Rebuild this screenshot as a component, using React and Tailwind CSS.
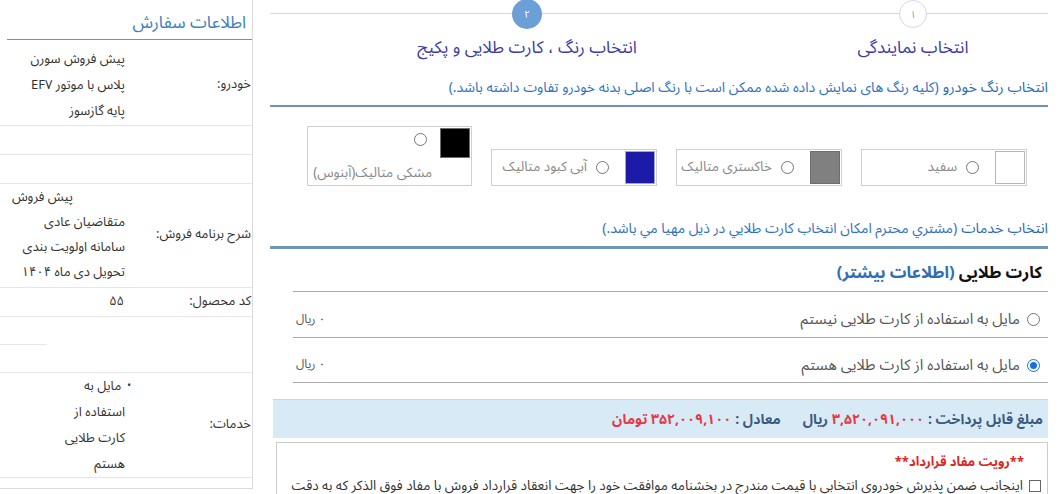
import React from "react";

const FONT = { fontFamily: '"Noto Sans Arabic", "Noto Naskh Arabic", "DejaVu Sans", sans-serif' };

function Radio({ checked = false }) {
  if (checked) {
    return (
      <span className="block shrink-0 w-[13px] h-[13px] rounded-full border-[1.5px] border-[#1a6fd6] bg-white">
        <span className="flex w-full h-full items-center justify-center">
          <span className="block w-[7px] h-[7px] rounded-full bg-[#1a6fd6]" />
        </span>
      </span>
    );
  }
  return <span className="block shrink-0 w-[13px] h-[13px] rounded-full border-[1.5px] border-[#767676] bg-white" />;
}

function ColorCard({ swatch, swatchBorder, label }) {
  return (
    <div className="w-[166px] h-[37px] border border-[#cfcfcf] bg-white p-[1px] flex items-center">
      <span className={`block shrink-0 w-[30px] h-[33px] border ${swatchBorder}`} style={{ background: swatch }} />
      <span className="block mr-[16px] ml-[9px]"><Radio /></span>
      <span className="text-[13.5px] text-[#8a8a8a] whitespace-nowrap">{label}</span>
    </div>
  );
}

function SideRow({ label, children, className = "" }) {
  return (
    <div className={`flex border-b border-[#e6e6e6] ${className}`}>
      <div className="w-[124px] shrink-0 flex items-center pr-[1px] text-[13px] text-[#333]">{label}</div>
      <div className="flex-1 pr-[3px] text-[13px] text-[#333]">{children}</div>
    </div>
  );
}

export default function App() {
  return (
    <div dir="rtl" style={FONT} className="w-[1063px] h-[494px] overflow-hidden bg-white flex gap-[17px] pr-[15px]">
      {/* Main */}
      <div className="w-[778px] shrink-0">
        {/* Stepper */}
        <div className="mt-[13px] border-t border-[#d6d6d6]">
          <div className="-mt-[14px] flex gap-[126px] pr-[5px]">
            <div className="w-[260px] flex flex-col items-center">
              <div className="w-[28px] h-[28px] rounded-full bg-white border border-[#d9d9d9] flex items-center justify-center text-[10px] text-[#999]">۱</div>
              <div className="mt-[8px] leading-[24px] text-[17px] text-[#3b3ba8]">انتخاب نمایندگی</div>
            </div>
            <div className="w-[260px] flex flex-col items-center">
              <div className="w-[30px] h-[30px] -mt-[1px] rounded-full bg-[#6b9fd6] flex items-center justify-center text-[10px] text-white">۲</div>
              <div className="mt-[7px] leading-[24px] text-[17px] text-[#3b3ba8]">انتخاب رنگ ، کارت طلایی و پکیج</div>
            </div>
          </div>
        </div>

        {/* Color heading */}
        <div className="mt-[16px] pb-[5px] border-b-2 border-[#6d93bc] flex items-baseline gap-[4px] leading-[24px]">
          <span className="text-[14.5px] text-[#2a6cb2]">انتخاب رنگ خودرو</span>
          <span className="text-[14px] text-[#2f72c4]">(کلیه رنگ های نمایش داده شده ممکن است با رنگ اصلی بدنه خودرو تفاوت داشته باشد.)</span>
        </div>

        {/* Color cards */}
        <div className="mt-[19px] pr-[21px] flex items-end gap-[19px]">
          <ColorCard swatch="#ffffff" swatchBorder="border-[#b5b5b5]" label="سفید" />
          <ColorCard swatch="#808080" swatchBorder="border-[#6e6e6e]" label="خاکستری متالیک" />
          <ColorCard swatch="#1b1ba8" swatchBorder="border-[#a3a3d0]" label="آبی کبود متالیک" />
          <div className="w-[165px] h-[60px] border border-[#cfcfcf] bg-white p-[1px]">
            <div className="flex items-center">
              <span className="block shrink-0 w-[30px] h-[30px] bg-black border border-[#6e6e6e]" />
              <span className="block mr-[13px] -mt-[8px]"><Radio /></span>
            </div>
            <div className="pr-[38px] mt-[5px] text-[13.5px] text-[#8a8a8a] whitespace-nowrap leading-[20px]">مشکی متالیک(آبنوس)</div>
          </div>
        </div>

        {/* Services heading */}
        <div className="mt-[31px] pb-[5px] border-b-[3px] border-[#7096b6] flex items-baseline gap-[4px] leading-[24px]">
          <span className="text-[14.5px] text-[#2a6cb2]">انتخاب خدمات</span>
          <span className="text-[14px] text-[#2f72c4]">(مشتري محترم امكان انتخاب كارت طلايي در ذيل مهيا مي باشد.)</span>
        </div>

        <div className="mt-[12px] pr-[6px] leading-[24px] text-[16.5px] font-bold">
          <span className="text-[#111]">کارت طلایی </span>
          <span className="text-[#2f6db5]">(اطلاعات بیشتر)</span>
        </div>

        <div className="mt-[6px] ml-[23px]">
          <div className="h-[46px] border-t border-[#aaaaaa] flex items-center justify-between pt-[10px] pr-[8px] pl-[3px]">
            <div className="flex items-center gap-[7px]">
              <Radio />
              <span className="text-[15px] text-[#555]">مایل به استفاده از کارت طلایی نیستم</span>
            </div>
            <span className="text-[12px] text-[#555]">۰ ریال</span>
          </div>
          <div className="h-[46px] border-t border-b border-[#aaaaaa] flex items-center justify-between pt-[10px] pr-[8px] pl-[3px]">
            <div className="flex items-center gap-[7px]">
              <Radio checked />
              <span className="text-[15px] text-[#555]">مایل به استفاده از کارت طلایی هستم</span>
            </div>
            <span className="text-[12px] text-[#555]">۰ ریال</span>
          </div>
        </div>

        {/* Payment bar */}
        <div className="mt-[16px] ml-[3px] h-[39px] bg-[#d8eaf6] border-t border-[#c2dbec] flex items-center pr-[5px] text-[14px] font-bold whitespace-nowrap">
          <span className="text-[#3a5b80]">مبلغ قابل پرداخت : </span>
          <span className="text-[#e53945] mr-[4px]">۳,۵۲۰,۰۹۱,۰۰۰</span>
          <span className="text-[#3a5b80] mr-[4px]">ریال</span>
          <span className="text-[#3a5b80] mr-[22px]">معادل : </span>
          <span className="text-[#e53945] mr-[4px]">۳۵۲,۰۰۹,۱۰۰ تومان</span>
        </div>

        {/* Contract box */}
        <div className="mt-[4px] ml-[6px] h-[60px] border border-[#cccccc] pt-[9px]">
          <div className="pr-[23px] text-[13px] font-bold text-[#e02424] leading-[20px]">**رویت مفاد قرارداد**</div>
          <div className="mt-[5px] pr-[6px] flex items-center gap-[6px] text-[13.5px] text-[#333] whitespace-nowrap leading-[17px]">
            <span className="block shrink-0 w-[12px] h-[12px] border border-[#666] bg-white" />
            <span>اینجانب ضمن پذیرش خودروی انتخابی با قیمت مندرج در بخشنامه موافقت خود را جهت انعقاد قرارداد فروش با مفاد فوق الذکر که به دقت</span>
          </div>
        </div>
      </div>

      {/* Sidebar */}
      <div className="w-[253px] shrink-0 h-[489px] border-r border-b border-[#dcdcdc]">
        <div className="ml-[7px] pt-[11px] pb-[4px] border-b border-[#6a92ba] leading-[24px] text-[17px] text-[#3c80c2] pr-[6px]">اطلاعات سفارش</div>
        <SideRow label="خودرو:" className="pt-[6px] pb-[1px]">
          <div className="leading-[26px]">
            <div>پیش فروش سورن</div>
            <div>پلاس با موتور EF۷</div>
            <div>پایه گازسوز</div>
          </div>
        </SideRow>
        <SideRow label="" className="h-[29px]" />
        <SideRow label="" className="h-[29px]" />
        <SideRow label="شرح برنامه فروش:" className="pt-[1px] pb-[2px]">
          <div className="leading-[25px]">
            <div className="pr-[52px]">پیش فروش</div>
            <div>متقاضیان عادی</div>
            <div>سامانه اولویت بندی</div>
            <div>تحویل دی ماه ۱۴۰۴</div>
          </div>
        </SideRow>
        <SideRow label="کد محصول:" className="h-[29px] items-center">
          <div className="pr-[1px]">۵۵</div>
        </SideRow>
        <div className="h-[28px] flex justify-end">
          <div className="w-[47px] h-full border-b border-[#e6e6e6]" />
        </div>
        <div className="h-[28px] border-b border-[#e6e6e6]" />
        <SideRow label="خدمات:" className="h-[105px]">
          <div className="leading-[26px]">
            <div className="flex items-center gap-[6px] -mr-[6px]"><span className="text-[10px]">•</span><span>مایل به</span></div>
            <div>استفاده از</div>
            <div>کارت طلایی</div>
            <div>هستم</div>
          </div>
        </SideRow>
      </div>
    </div>
  );
}
